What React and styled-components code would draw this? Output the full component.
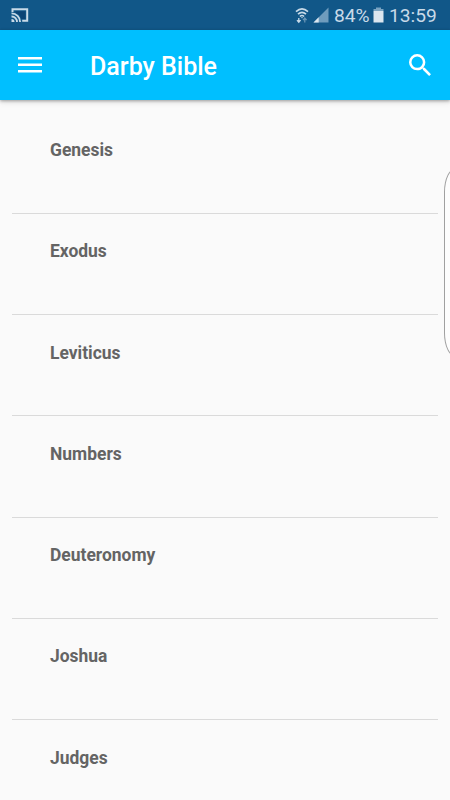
import React from 'react';
import styled, { createGlobalStyle } from 'styled-components';

const GlobalStyle = createGlobalStyle`
  * { box-sizing: border-box; }
  html, body { margin: 0; padding: 0; background: #fafafa; overflow: hidden; }
  body { font-family: Roboto, "Liberation Sans", sans-serif; }
`;

const Screen = styled.div`
  position: relative;
  display: flex;
  flex-direction: column;
  width: 450px;
  height: 800px;
  overflow: hidden;
  background: #fafafa;
`;

const StatusBar = styled.header`
  display: flex;
  align-items: center;
  flex: 0 0 30px;
  padding: 0 13px 0 11px;
  background: #115788;
  color: #c8dae8;
`;

const StatusIcon = styled.svg`
  display: block;
  flex: none;
  margin-left: ${(p) => p.$gap || 0}px;
`;

const Spacer = styled.div`
  flex: 1;
`;

const StatusText = styled.span`
  width: ${(p) => p.$width}px;
  margin-left: ${(p) => p.$gap}px;
  padding-top: 2px;
  font-size: 19.2px;
  line-height: 28px;
  white-space: nowrap;
`;

const AppBar = styled.nav`
  display: flex;
  align-items: center;
  flex: 0 0 70px;
  padding: 0 19px 0 18px;
  background: #00bfff;
  color: #fff;
  box-shadow: 0 1px 3px rgba(0, 0, 0, 0.34), 0 3px 6px rgba(0, 0, 0, 0.08);
  z-index: 1;
`;

const IconButton = styled.button`
  display: flex;
  padding: 0;
  border: 0;
  background: none;
  color: inherit;
`;

const Title = styled.h1`
  flex: 1;
  margin: 0 0 0 48px;
  padding-top: 4px;
  font-size: 25px;
  font-weight: 500;
  line-height: 30px;
`;

const BookList = styled.ul`
  flex: none;
  margin: 0;
  padding: 12.5px 12.5px 0 12px;
  list-style: none;
`;

const BookRow = styled.li`
  height: 101.25px;
  padding: 25.7px 0 0 38px;
  border-bottom: 1px solid #dadada;
  color: #646464;
  font-size: 17.45px;
  font-weight: 700;
  line-height: 24px;
`;

const EdgeHandle = styled.div`
  position: absolute;
  top: 168px;
  left: 444px;
  width: 24px;
  height: 189px;
  border: 1px solid #a0a0a0;
  border-radius: 12px / 24px;
  background: #fdfdfd;
`;

const books = ['Genesis', 'Exodus', 'Leviticus', 'Numbers', 'Deuteronomy', 'Joshua', 'Judges'];

const CastIcon = () => (
  <StatusIcon width="18" height="15" viewBox="0 0 18 15" fill="none" stroke="currentColor">
    <path d="M1.5 4V1.3h14.7v11.5h-5" strokeWidth="2" />
    <path d="M4.5 3.3h9.8v7.8h-4A8 8 0 0 0 4.5 5z" fill="#0b4475" stroke="none" />
    <path d="M.5 5.4a8.4 8.4 0 0 1 8.6 8.6M.5 8.5a5.3 5.3 0 0 1 5.5 5.5" strokeWidth="1.8" />
    <path d="M.5 11a3 3 0 0 1 3 3h-3z" fill="currentColor" stroke="none" />
  </StatusIcon>
);

const WifiIcon = () => (
  <StatusIcon width="14" height="17" viewBox="0 0 14 17" fill="none" stroke="currentColor">
    <path d="M1 4.7Q7-1 13 4.7M3 7.2Q7 3.4 11 7.2M4.9 9.5Q7 7.5 9.1 9.5" strokeWidth="1.6" />
    <path d="M5.9 10.2h2.2L7 11.6z" fill="currentColor" stroke="none" />
    <path d="M3.8 11v4.3M2 13.1l1.8 2.2L5.6 13.1" strokeWidth="1.3" />
    <path d="M9.8 15.6V11M8 13.2 9.8 11l1.8 2.2" strokeWidth="1.2" opacity=".5" />
  </StatusIcon>
);

const SignalIcon = () => (
  <StatusIcon $gap={4} width="16" height="16" viewBox="0 0 16 16">
    <path d="M15.5.5v15H.5z" fill="#6f9cbd" />
    <path d="M5.7 10.3v5.2H.5z" fill="#dbe6ef" />
  </StatusIcon>
);

const BatteryIcon = () => (
  <StatusIcon $gap={3} width="11" height="16" viewBox="0 0 11 16">
    <path d="M3 .5h5v1.6h2.5v2H.5v-2H3z" fill="#7ba4c2" />
    <path d="M.5 4h10v11.5H.5z" fill="#dbe6ef" />
  </StatusIcon>
);

export default function App() {
  return (
    <>
      <GlobalStyle />
      <Screen>
        <StatusBar>
          <CastIcon />
          <Spacer />
          <WifiIcon />
          <SignalIcon />
          <StatusText $gap={5} $width={36}>84%</StatusText>
          <BatteryIcon />
          <StatusText $gap={5} $width={48}>13:59</StatusText>
        </StatusBar>
        <AppBar>
          <IconButton aria-label="Menu">
            <svg width="24" height="18" viewBox="0 0 24 18" fill="currentColor">
              <path d="M0 1h24v2.6H0zM0 7.4h24V10H0zM0 14h24v2.6H0z" />
            </svg>
          </IconButton>
          <Title>Darby Bible</Title>
          <IconButton aria-label="Search">
            <svg width="22" height="22" viewBox="3 3 17.49 17.49" fill="currentColor">
              <path d="M15.5 14h-.79l-.28-.27A6.47 6.47 0 0 0 16 9.5 6.5 6.5 0 1 0 9.5 16c1.61 0 3.09-.59 4.23-1.57l.27.28v.79l5 4.99L20.49 19l-4.99-5zm-6 0a4.5 4.5 0 1 1 0-9 4.5 4.5 0 0 1 0 9z" />
            </svg>
          </IconButton>
        </AppBar>
        <BookList>
          {books.map((book) => (
            <BookRow key={book}>{book}</BookRow>
          ))}
        </BookList>
        <EdgeHandle />
      </Screen>
    </>
  );
}
